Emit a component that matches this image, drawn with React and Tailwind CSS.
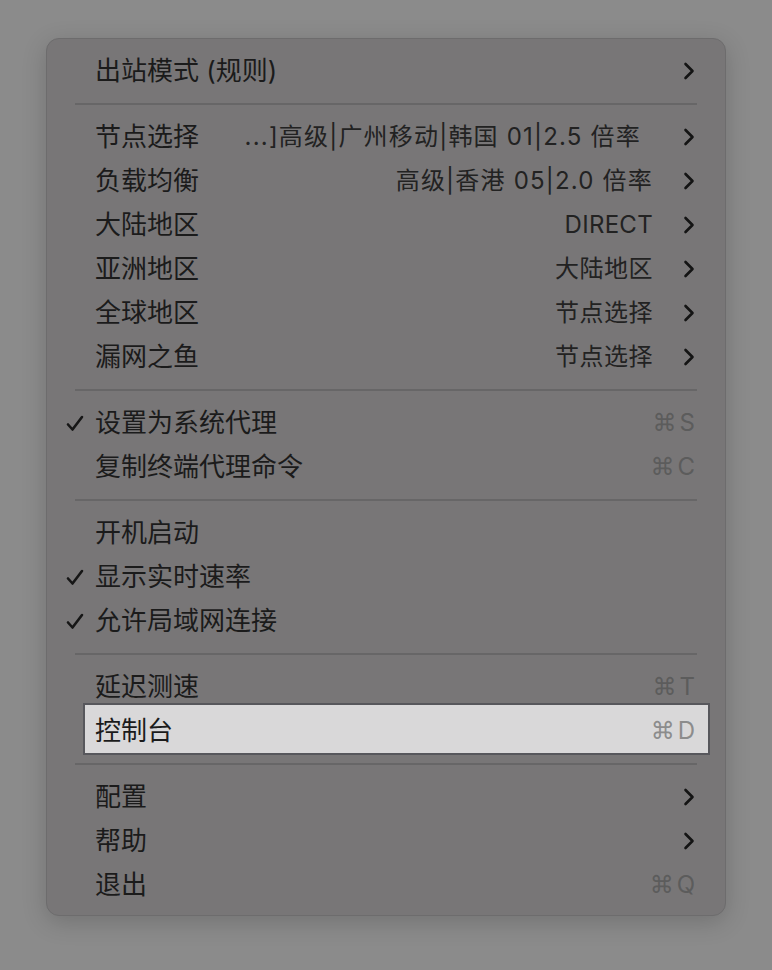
const FONT = { fontFamily: 'Inter, "Noto Sans CJK SC", "DejaVu Sans", sans-serif' };

const SECTIONS = [
  [{ label: '出站模式 (规则)', submenu: true }],
  [
    { label: '节点选择', value: '...]高级|广州移动|韩国 01|2.5 倍率', submenu: true, valueClass: 'mr-[12px] tracking-[1.2px]' },
    { label: '负载均衡', value: '高级|香港 05|2.0 倍率', submenu: true, valueClass: 'tracking-[1.2px]' },
    { label: '大陆地区', value: 'DIRECT', submenu: true, valueClass: 'tracking-[0.3px]' },
    { label: '亚洲地区', value: '大陆地区', submenu: true, valueClass: 'tracking-[0.5px]' },
    { label: '全球地区', value: '节点选择', submenu: true, valueClass: 'tracking-[0.5px]' },
    { label: '漏网之鱼', value: '节点选择', submenu: true, valueClass: 'tracking-[0.5px]' }
  ],
  [
    { label: '设置为系统代理', checked: true, shortcut: 'S' },
    { label: '复制终端代理命令', shortcut: 'C' }
  ],
  [
    { label: '开机启动' },
    { label: '显示实时速率', checked: true },
    { label: '允许局域网连接', checked: true }
  ],
  [
    { label: '延迟测速', shortcut: 'T' },
    { label: '控制台', shortcut: 'D', active: true }
  ],
  [
    { label: '配置', submenu: true },
    { label: '帮助', submenu: true },
    { label: '退出', shortcut: 'Q' }
  ]
];

function Check() {
  return (
    <svg width="18" height="17" viewBox="0 0 18 17" className="absolute left-[19px] top-[14px]">
      <path d="M2 9.5 L6.5 14.5 L16 2" fill="none" stroke="#161616" strokeWidth="2.6" strokeLinecap="round" strokeLinejoin="round" />
    </svg>
  );
}

function Chevron() {
  return (
    <svg width="12" height="18" viewBox="0 0 12 18" className="ml-[30px]">
      <path d="M2.5 2 L9.5 9 L2.5 16" fill="none" stroke="#141414" strokeWidth="2.6" strokeLinecap="round" strokeLinejoin="round" />
    </svg>
  );
}

function MenuRow({ item }) {
  const { label, value, submenu, checked, shortcut, active, valueClass = '' } = item;

  return (
    <div className="relative flex h-[44px] items-center pl-[48px] pr-[30px]">
      {active ? (
        <div className="absolute left-[36px] right-[15px] top-[-6px] bottom-[-2px] border-2 border-[#57575c] bg-[#d9d8d9]" />
      ) : null}
      {checked ? <Check /> : null}
      <span className="relative text-[26px] leading-none text-[#1b1b1b]">{label}</span>
      <div className="relative ml-auto flex items-center">
        {value ? (
          <span className={`text-[24px] leading-none text-[#222] ${valueClass}`}>{value}</span>
        ) : null}
        {submenu ? <Chevron /> : null}
        {shortcut ? (
          <span className={`flex items-center text-[24px] leading-none ${active ? 'text-[#8c8c8c]' : 'text-[#5c5c5c]'}`}>
            <span className="mr-[3px] text-[24px]" style={{ fontFamily: '"DejaVu Sans", sans-serif' }}>⌘</span>
            {shortcut}
          </span>
        ) : null}
      </div>
    </div>
  );
}

function Separator() {
  return (
    <div className="flex h-[22px] items-center px-[28px]">
      <div className="h-[2px] w-full bg-[#676667]" />
    </div>
  );
}

export default function App() {
  return (
    <div className="min-h-[970px] w-full bg-[#8b8b8b] pt-[38px]" style={FONT}>
      <div className="mx-[46px] w-[680px] rounded-[13px] border border-[#6d6c6d] bg-[#787677] pt-[10px] pb-[8px] shadow-[0_6px_24px_rgba(0,0,0,0.18)]">
        {SECTIONS.map((section, index) => (
          <div key={index}>
            {index > 0 ? <Separator /> : null}
            {section.map((item) => (
              <MenuRow key={item.label} item={item} />
            ))}
          </div>
        ))}
      </div>
    </div>
  );
}
